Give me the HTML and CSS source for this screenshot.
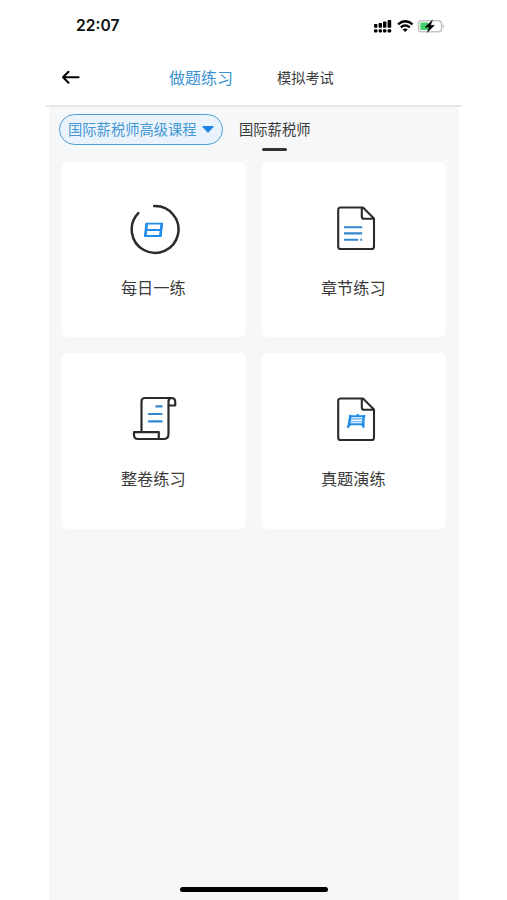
FILE: index.html
```html
<!DOCTYPE html>
<html lang="zh-CN">
<head>
<meta charset="utf-8">
<title>做题练习</title>
<link rel="stylesheet" href="styles.css">
</head>
<body>
<div class="screen">
  <header class="top">
    <div class="status">
      <span class="time">22:07</span>
      <svg class="signals" width="72" height="16" viewBox="0 0 72 16">
        <g fill="#000">
          <rect x="1" y="6" width="3.4" height="3.8" rx=".7"/><rect x="5.6" y="5" width="3.4" height="4.8" rx=".7"/><rect x="10" y="3.5" width="3.4" height="6.3" rx=".7"/><rect x="14.6" y="2" width="3.6" height="7.8" rx=".7"/>
          <rect x="1" y="11.2" width="3.4" height="3.2" rx="1"/><rect x="5.6" y="11.2" width="3.4" height="3.2" rx="1"/><rect x="10" y="11.2" width="3.4" height="3.2" rx="1"/><rect x="14.6" y="11.2" width="3.6" height="3.2" rx="1"/>
        </g>
        <g fill="none" stroke="#000" stroke-width="2.2">
          <path d="M25 6.4Q32.2 .1 39.6 6.4M27.8 9.4Q32.2 5.4 36.8 9.4"/>
        </g>
        <path d="M29.6 11.5Q32.2 9.6 34.8 11.5L32.2 14Z"/>
        <rect x="45.5" y="2.8" width="23" height="11" rx="2.8" fill="#fff" stroke="#c3c5c3" stroke-width="1.5"/>
        <path d="M69.6 6Q72.4 8.2 69.6 10.5Z" fill="#bbb"/>
        <rect x="47.3" y="4.6" width="8" height="7.4" rx="1" fill="#43cf6b"/>
        <path d="M59.5 2L52 9.2H56L54.2 14.4L61.5 7.3H57.5Z" stroke="#000" stroke-width=".4"/>
      </svg>
    </div>
    <nav class="nav">
      <svg class="back" width="20" height="16" viewBox="0 0 20 16" fill="none" stroke="#000" stroke-width="2" stroke-linecap="round" stroke-linejoin="round"><path d="M17.6 8.3H2M7.5 2.8L2 8.3L7.5 13.8"/></svg>
      <span class="nav-item active">做题练习</span>
      <span class="nav-item">模拟考试</span>
    </nav>
  </header>
  <main class="content">
    <div class="filters">
      <div class="course"><span>国际薪税师高级课程</span><svg width="12" height="7" viewBox="0 0 12 7"><path d="M.8 0H11.2Q12 .2 11.5 1L6.7 6.3Q6 7 5.3 6.3L.5 1Q0 .2 .8 0Z" fill="#1b86e3"/></svg></div>
      <div class="tab">国际薪税师</div>
    </div>
    <div class="grid">
      <section class="card">
        <svg width="56" height="56" viewBox="0 0 56 56" fill="none">
          <path d="M28.3 4.1A23.4 23.4 0 1 1 12.3 11.2" stroke="#2b2b2d" stroke-width="2.5" stroke-linecap="round"/>
          <path d="M20.8 21.7H36L34.5 34H19.3ZM20.1 28H34.8" stroke="#218ce8" stroke-width="1.8"/>
          <path d="M20.8 21L19.1 34.8M35.8 21L34.2 34.8" stroke="#218ce8" stroke-width="2.6"/>
        </svg>
        <span>每日一练</span>
      </section>
      <section class="card">
        <svg width="56" height="56" viewBox="0 0 56 56" fill="none">
          <path d="M14 5.5H37L48 16.5V44.4Q48 47 45.6 47H14.6Q12.2 47 12.2 44.4V8Q12.2 5.5 14.6 5.5M35.8 6V14.4Q35.8 16.8 38.2 16.8H47.7" stroke="#2b2b2d" stroke-width="2.1" stroke-linejoin="round"/>
          <path d="M18 25.2H36.2M18 31.4H36.2M18 37.7H32.2M34.3 37.7H36.2" stroke="#3588d0" stroke-width="2.1"/>
        </svg>
        <span>章节练习</span>
      </section>
      <section class="card">
        <svg width="56" height="56" viewBox="0 0 56 56" fill="none">
          <path d="M15.5 39V8.5Q15.5 5 19 5H45.5Q49.2 5 49.2 9V12.5H42.5V8.5Q42.5 5 46 5M42.5 12V41Q42.5 46 37.5 46H12Q8 46 8 42V39.2H32.8V46" stroke="#2b2b2d" stroke-width="2.2" stroke-linejoin="round"/>
          <path d="M30.3 13.4H35.6M22.8 21H35.6M22.8 28.4H35.6" stroke="#3588d0" stroke-width="2.2" stroke-linecap="round"/>
        </svg>
        <span>整卷练习</span>
      </section>
      <section class="card">
        <svg width="56" height="56" viewBox="0 0 56 56" fill="none">
          <path d="M14 5.5H37L48 16.5V44.4Q48 47 45.6 47H14.6Q12.2 47 12.2 44.4V8Q12.2 5.5 14.6 5.5M35.8 6V14.4Q35.8 16.8 38.2 16.8H47.7" stroke="#2b2b2d" stroke-width="2.1" stroke-linejoin="round"/>
          <path d="M24.5 22L22.8 33M37.8 22L36.8 33" stroke="#218ce8" stroke-width="2.6"/>
          <path d="M23 23.2H39.3M31.8 20.8L31.5 23.5M22 31.2H38.5M21.3 34.7L24 31.5M38 34.7L36.5 31.5" stroke="#218ce8" stroke-width="2.1"/>
          <path d="M25 26H37M24.8 28.6H36.7" stroke="#70b8f1" stroke-width="1.4"/>
        </svg>
        <span>真题演练</span>
      </section>
    </div>
    <div class="home"></div>
  </main>
</div>
</body>
</html>
```
FILE: styles.css
```css
* { box-sizing: border-box; }
body { margin: 0; background: #fff; color: #3a3a3a; font-family: "Noto Sans CJK SC", sans-serif; }
.screen { width: 416px; height: 900px; margin-left: 46px; display: flex; flex-direction: column; }
.top { height: 107px; border-bottom: 2px solid #e5e6e8; }
.status { height: 52px; padding: 0 17px 0 30px; display: flex; align-items: center; justify-content: space-between; }
.time { font: 600 15.6px/20px Inter, sans-serif; color: #111; }
.nav { height: 49px; display: flex; align-items: center; padding-left: 15px; }
.back { margin-right: 88px; }
.nav-item { font-size: 14.2px; line-height: 24px; white-space: nowrap; }
.nav-item.active { font-size: 16px; color: #3a92d2; margin-right: 44px; }
.content { flex: 1; margin: 0 3px; background: #f5f7f9; display: flex; flex-direction: column; }
.filters { height: 54.5px; padding: 7px 0 0 10px; display: flex; align-items: flex-start; }
.course { width: 164px; height: 31px; border: 1.5px solid #4d9fd3; border-radius: 16px; background: #eaf3fc; color: #4398d3; font-size: 14.3px; line-height: 24px; display: flex; align-items: center; justify-content: space-between; padding: 0 8px; white-space: nowrap; }
.course span { padding-bottom: 2px; }
.tab { height: 38px; margin-left: 16px; font-size: 14.3px; line-height: 30px; white-space: nowrap; display: flex; flex-direction: column; align-items: center; }
.tab::after { content: ""; width: 25px; height: 3px; margin-top: 4px; border-radius: 2px; background: #333436; flex: none; }
.grid { display: grid; grid-template-columns: 184px 184px; grid-auto-rows: 175.5px; gap: 16px; padding-left: 13px; }
.card { background: #fff; border-radius: 6px; display: flex; flex-direction: column; align-items: center; padding-top: 40px; }
.card svg { display: block; }
.card span { margin: 17px 1.5px 0 0; font-size: 16.2px; line-height: 24px; }
.home { width: 148px; height: 5px; margin: auto auto 8px 131px; border-radius: 3px; background: #000; }
```
